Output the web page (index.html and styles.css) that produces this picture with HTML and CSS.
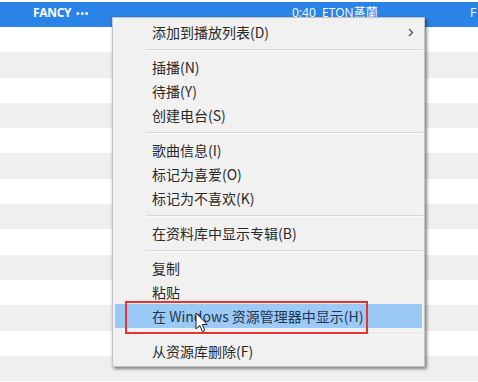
FILE: index.html
```html
<!DOCTYPE html>
<html lang="zh-CN">
<head>
<meta charset="utf-8">
<title>Context menu</title>
<link rel="stylesheet" href="styles.css">
</head>
<body>
<div class="list">
  <div class="row row-selected">
    <span class="cell c-name">FANCY <span class="dots">•••</span></span>
    <span class="cell c-time">0:40</span>
    <span class="cell c-artist">ETON蒸蘭</span>
    <span class="cell c-last">F</span>
  </div>
  <div class="row"></div>
  <div class="row alt"></div>
  <div class="row"></div>
  <div class="row alt"></div>
  <div class="row"></div>
  <div class="row alt"></div>
  <div class="row"></div>
  <div class="row alt"></div>
  <div class="row"></div>
  <div class="row alt"></div>
  <div class="row"></div>
  <div class="row alt"></div>
  <div class="row"></div>
  <div class="row alt"></div>
</div>

<div class="menu">
  <div class="item has-sub"><span>添加到播放列表(D)</span>
    <svg class="chev" width="6" height="9" viewBox="0 0 6 9"><path d="M1 1 L4.5 4.5 L1 8" fill="none" stroke="#555" stroke-width="1.3"/></svg>
  </div>
  <div class="sep"></div>
  <div class="item">插播(N)</div>
  <div class="item">待播(Y)</div>
  <div class="item">创建电台(S)</div>
  <div class="sep"></div>
  <div class="item">歌曲信息(I)</div>
  <div class="item">标记为喜爱(O)</div>
  <div class="item">标记为不喜欢(K)</div>
  <div class="sep"></div>
  <div class="item">在资料库中显示专辑(B)</div>
  <div class="sep"></div>
  <div class="item">复制</div>
  <div class="item">粘贴</div>
  <div class="item active">在 Windows 资源管理器中显示(H)<span class="mark"></span>
    <svg class="cursor" width="14" height="22" viewBox="0 0 14 22"><path d="M1 1 L1 17 L4.8 13.4 L7.4 19.6 L9.8 18.6 L7.3 12.5 L12.2 12.5 Z" fill="#fff" stroke="#222" stroke-width="1" stroke-linejoin="round"/></svg>
  </div>
  <div class="sep faint"></div>
  <div class="item">从资源库删除(F)</div>
</div>
</body>
</html>
```

FILE: styles.css
```css
html, body {
  margin: 0;
  padding: 0;
  background: #ffffff;
  width: 478px;
  height: 382px;
  overflow: hidden;
  font-family: "Noto Sans CJK SC", "Noto Sans", sans-serif;
}

.list {
  padding-top: 2px;
  display: flex;
  flex-direction: column;
}

.row {
  height: 25.3px;
  background: #ffffff;
  display: flex;
  align-items: center;
}

.row.alt {
  background: #efefef;
}

.row-selected {
  height: 25px;
  background: #2a84e8;
  color: #ffffff;
  font-family: "Open Sans", "Noto Sans CJK SC", sans-serif;
  font-weight: 700;
  font-size: 12px;
  align-items: flex-start;
}

.cell {
  padding-top: 3px;
  white-space: nowrap;
  line-height: 16px;
}

.c-name {
  margin-left: 33px;
  width: 259px;
  letter-spacing: -0.3px;
}

.dots {
  font-size: 9px;
  letter-spacing: 1px;
  margin-left: 2px;
}

.c-time {
  width: 30px;
  font-weight: 400;
}

.c-artist {
  width: 148px;
  font-weight: 400;
}

.c-last {
  font-weight: 400;
}

.menu {
  position: absolute;
  left: 112px;
  top: 17px;
  width: 311px;
  padding: 2px 0 3px 0;
  background: #f1f1f1;
  border: 1px solid #c4c4c4;
  box-shadow: 2px 2px 3px rgba(0, 0, 0, 0.45), -1px 0 2px rgba(0, 0, 0, 0.08);
  font-size: 14px;
  color: #2a2a2a;
}

.item {
  position: relative;
  height: 24px;
  line-height: 24px;
  padding-left: 39px;
  display: flex;
  align-items: center;
  justify-content: space-between;
  white-space: nowrap;
}

.has-sub {
  padding-right: 10px;
}

.sep {
  height: 11px;
  display: flex;
  align-items: center;
  padding-left: 33px;
  padding-right: 1px;
}

.sep::before {
  content: "";
  flex: 1;
  height: 1px;
  background: #d6d6d6;
  box-shadow: 0 1px 0 #fbfbfb;
}

.sep.faint::before {
  background: #e6e6e6;
}

.item.active {
  background: #9ccaf6;
  color: #1f3550;
  margin: 0 2px 0 2px;
  padding-left: 37px;
  justify-content: flex-start;
}

.mark {
  position: absolute;
  left: 10px;
  top: -3px;
  width: 239px;
  height: 29px;
  border: 2px solid #e7322f;
}

.cursor {
  position: absolute;
  left: 80px;
  top: 8px;
}
```
